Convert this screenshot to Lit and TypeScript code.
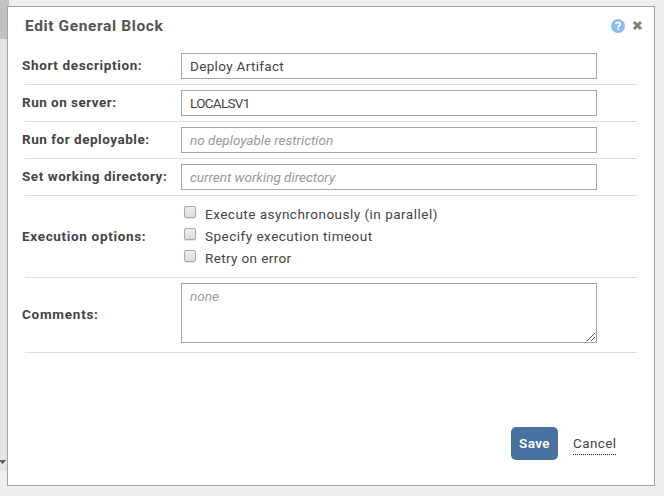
import { LitElement, html, css } from "lit";
import { customElement } from "lit/decorators.js";

interface Field {
  label: string;
  labelSpacing: number;
  text: string;
  textSpacing: number;
  hint?: boolean;
}

const FIELDS: Field[] = [
  { label: "Short description:", labelSpacing: 0.64, text: "Deploy Artifact", textSpacing: 0.33 },
  { label: "Run on server:", labelSpacing: 0.48, text: "LOCALSV1", textSpacing: -0.7 },
  { label: "Run for deployable:", labelSpacing: 0.52, text: "no deployable restriction", textSpacing: 0, hint: true },
  { label: "Set working directory:", labelSpacing: 0.54, text: "current working directory", textSpacing: 0, hint: true },
];

const OPTIONS = [
  { text: "Execute asynchronously (in parallel)", spacing: 0.49 },
  { text: "Specify execution timeout", spacing: 0.49 },
  { text: "Retry on error", spacing: 0.37 },
];

@customElement("app-root")
export class AppRoot extends LitElement {
  static styles = css`
    :host {
      display: block;
      position: relative;
      box-sizing: border-box;
      width: 664px;
      height: 496px;
      padding: 6px 0 0 7px;
      overflow: hidden;
      background: #efefef;
      color: #444;
      font: 13.5px/18px Roboto, "Liberation Sans", sans-serif;
    }
    .scroll { position: absolute; left: 0; top: 0; width: 9px; height: 471px; background: #e5e5e5; }
    .thumb { height: 39px; background: #c1c1c1; }
    .arrow { position: absolute; left: 0; top: 460px; width: 6px; height: 4px; display: block; }
    .dialog {
      position: relative;
      box-sizing: border-box;
      width: 648px;
      height: 480px;
      background: #fff;
      border: 1px solid #a5a5a5;
      display: flex;
      flex-direction: column;
    }
    header { display: flex; align-items: center; box-sizing: border-box; height: 38px; padding: 0 11px 1px 17px; flex: none; }
    h1 { margin: 0; flex: 1; font-size: 15.5px; font-weight: 700; line-height: 20px; letter-spacing: 0.62px; padding-top: 1px; color: #555; }
    .help { width: 14px; height: 14px; margin-right: 7px; }
    .close { width: 11px; height: 11px; }
    .row {
      display: flex;
      align-items: center;
      box-sizing: border-box;
      width: 612px;
      height: 37px;
      margin-left: 17px;
      border-bottom: 1px solid #ddd;
      flex: none;
    }
    .first { height: 40px; padding-top: 3px; }
    .options { height: 82px; }
    .comments { height: 75px; }
    .label { width: 159px; margin-left: -3px; padding-bottom: 2px; font-weight: 700; font-size: 13.5px; white-space: nowrap; }
    .box {
      box-sizing: border-box;
      width: 416px;
      height: 26px;
      padding: 3px 8px;
      border: 1px solid #a5a5a5;
      background: #fff;
      white-space: nowrap;
    }
    .hint { color: #999; font-style: italic; }
    .area { height: 60px; position: relative; margin-bottom: 4px; }
    .grip { position: absolute; right: 1px; bottom: 1px; width: 8px; height: 8px; }
    .option { display: flex; height: 22px; align-items: center; }
    .option-text { padding-bottom: 2px; }
    .check {
      box-sizing: border-box;
      width: 12px;
      height: 12px;
      margin: 0 9px 5px 3px;
      border: 1px solid #aaa;
      border-radius: 2px;
      background: linear-gradient(#eee, #dcdcdc);
      box-shadow: 0 1px 1px #e4e4e4;
    }
    footer { display: flex; align-items: center; justify-content: flex-end; margin-top: 74px; padding-right: 38px; height: 33px; }
    .save {
      box-sizing: border-box;
      width: 47px;
      height: 33px;
      border-radius: 5px;
      background: #4971a0;
      color: #fff;
      font-weight: 600;
      letter-spacing: 0.4px;
      line-height: 33px;
      text-align: center;
      margin-right: 15px;
    }
    .cancel { width: 43px; height: 19px; margin-top: 3px; border-bottom: 1px dotted #223; letter-spacing: 0.4px; line-height: 16px; }
  `;

  render() {
    return html`
      <div class="scroll"><div class="thumb"></div></div>
      <svg class="arrow" viewBox="0 0 6 4" shape-rendering="crispEdges"><path d="M0 0h6v1H5v1H4v1H3v1H2V3H1V2H0z" fill="#666" /></svg>
      <div class="dialog">
        <header>
          <h1>Edit General Block</h1>
          <svg class="help" viewBox="0 0 14 14">
            <circle cx="7" cy="7" r="7" fill="#8bbbe8" />
            <path d="M4.8 5.1C5 2.6 9.4 2.8 9.2 5.3C9 6.8 7.1 6.7 7.1 8.6" fill="none" stroke="#fff" stroke-width="1.8" />
            <rect x="6.2" y="9.4" width="1.9" height="1.8" fill="#fff" />
          </svg>
          <svg class="close" viewBox="0 0 11 11"><path d="M2 2L9 9M9 2L2 9" stroke="#828282" stroke-width="3.1" /></svg>
        </header>
        ${FIELDS.map(
          (f, i) => html`<div class="row ${i === 0 ? "first" : ""}">
            <div class="label" style="letter-spacing:${f.labelSpacing}px">${f.label}</div>
            <div class="box ${f.hint ? "hint" : ""}" style="letter-spacing:${f.textSpacing}px">${f.text}</div>
          </div>`
        )}
        <div class="row options">
          <div class="label" style="letter-spacing:0.67px">Execution options:</div>
          <div>
            ${OPTIONS.map(
              (o) => html`<div class="option"><span class="check"></span><span class="option-text" style="letter-spacing:${o.spacing}px">${o.text}</span></div>`
            )}
          </div>
        </div>
        <div class="row comments">
          <div class="label" style="letter-spacing:0.74px">Comments:</div>
          <div class="box area hint">none
            <svg class="grip" viewBox="0 0 8 8" shape-rendering="crispEdges">
              <path d="M0 7h1v1H0zM1 6h1v1H1zM2 5h1v1H2zM3 4h1v1H3zM4 3h1v1H4zM5 2h1v1H5zM6 1h1v1H6zM7 0h1v1H7zM4 7h1v1H4zM5 6h1v1H5zM6 5h1v1H6zM7 4h1v1H7z" fill="#555" />
            </svg>
          </div>
        </div>
        <footer><div class="save">Save</div><div class="cancel">Cancel</div></footer>
      </div>
    `;
  }
}
